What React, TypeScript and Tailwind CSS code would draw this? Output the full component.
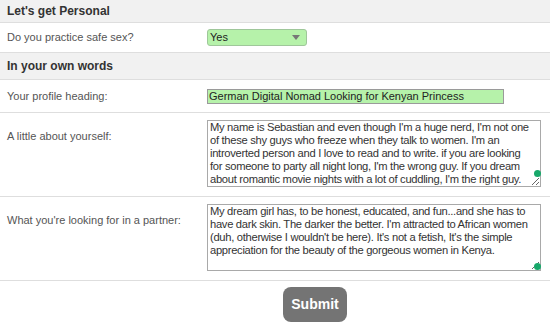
import React from "react"

const about = [
  "My name is Sebastian and even though I'm a huge nerd, I'm not one",
  "of these shy guys who freeze when they talk to women. I'm an",
  "introverted person and I love to read and to write. if you are looking",
  "for someone to party all night long, I'm the wrong guy. If you dream",
  "about romantic movie nights with a lot of cuddling, I'm the right guy.",
].join("\n")

const partner = [
  "My dream girl has, to be honest, educated, and fun...and she has to",
  "have dark skin. The darker the better. I'm attracted to African women",
  "(duh, otherwise I wouldn't be here). It's not a fetish, It's the simple",
  "appreciation for the beauty of the gorgeous women in Kenya.",
].join("\n")

function SectionHeader({ title, className = "" }: { title: string; className?: string }) {
  return (
    <div
      className={
        "flex items-center bg-[#f1f1f1] border-b border-[#dedede] px-[7px] text-[12px] font-bold text-[#333] " +
        className
      }
    >
      {title}
    </div>
  )
}

function Label({ children }: { children: React.ReactNode }) {
  return <div className="w-[207px] shrink-0 pl-[7px] text-[11px] text-[#555]">{children}</div>
}

function TextBox({ value, dot }: { value: string; dot: string }) {
  return (
    <div className="relative">
      <textarea
        readOnly
        defaultValue={value}
        className="block h-[67px] w-[334px] resize overflow-hidden whitespace-pre border border-[#a9a9a9] bg-white px-[2px] pt-[0px] pb-0 text-[11.2px] leading-[13px] tracking-[-0.3px] text-[#333] outline-none"
      />
      {/* grammar checker dot */}
      <span className={"absolute right-[0px] h-[7px] w-[7px] rounded-full bg-[#17a86a] " + dot} />
    </div>
  )
}

export default function App() {
  return (
    <div className="w-[550px] h-[327px] overflow-hidden bg-white font-['Liberation_Sans',Arial,sans-serif]">
      <SectionHeader title="Let's get Personal" className="h-[23px]" />

      <div className="flex h-[30px] items-center border-b border-[#dedede]">
        <Label>Do you practice safe sex?</Label>
        <div className="flex h-[17px] w-[100px] items-center justify-between rounded-[3px] border border-[#9fc79a] bg-[#b6f2aa] pl-[2px] pr-[6px] text-[11px] text-[#222]">
          <span>Yes</span>
          <svg width="8" height="5" viewBox="0 0 8 5">
            <path d="M0 0 L8 0 L4 5 Z" fill="#777" />
          </svg>
        </div>
      </div>

      <SectionHeader title="In your own words" className="h-[27px]" />

      <div className="flex h-[33px] items-center border-b border-[#dedede]">
        <Label>Your profile heading:</Label>
        <div className="flex h-[15px] w-[297px] items-center border border-[#9a9a9a] bg-[#b6f2aa] pl-[1px] text-[11px] text-[#222]">
          German Digital Nomad Looking for Kenyan Princess
        </div>
      </div>

      <div className="flex h-[84px] items-start border-b border-[#dedede] pt-[7px]">
        <div className="pt-[8px]">
          <Label>A little about yourself:</Label>
        </div>
        <TextBox value={about} dot="bottom-[10px]" />
      </div>

      <div className="flex h-[84px] items-start border-b border-[#dedede] pt-[7px]">
        <div className="pt-[8px]">
          <Label>What you're looking for in a partner:</Label>
        </div>
        <TextBox value={partner} dot="bottom-[1px]" />
      </div>

      <div className="flex pt-[6px] pl-[283px]">
        <button className="h-[35px] w-[64px] rounded-[8px] bg-[#747474] text-[14px] font-bold text-white">
          Submit
        </button>
      </div>
    </div>
  )
}
